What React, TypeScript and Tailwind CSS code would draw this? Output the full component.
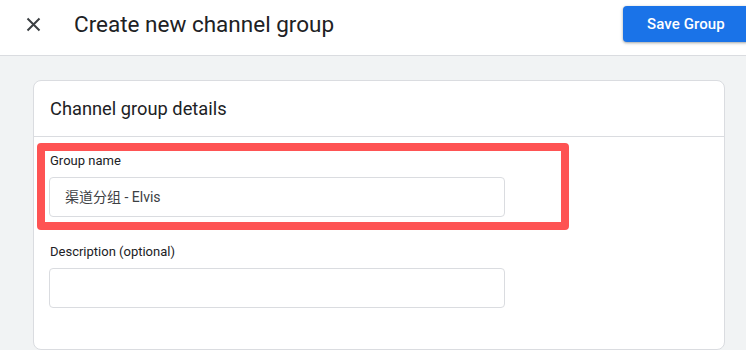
import React from "react";

const font = { fontFamily: "Roboto, 'Noto Sans CJK SC', sans-serif" };

export default function App() {
  return (
    <div className="w-full h-[350px] overflow-hidden bg-[#f1f3f4]" style={font}>
      <header className="h-[56px] bg-white border-b border-[#dadce0] flex items-start">
        <div className="h-[48px] flex items-center w-full">
          <button className="ml-[26px] w-[15px] h-[15px] flex items-center justify-center text-[#3c4043]">
            <svg width="15" height="15" viewBox="0 0 15 15" fill="none" stroke="currentColor" strokeWidth="2">
              <path d="M1.5 1.5 L13.5 13.5 M13.5 1.5 L1.5 13.5" />
            </svg>
          </button>
          <h1 className="ml-[33px] text-[22.5px] leading-[28px] text-[#202124] font-normal">Create new channel group</h1>
          <button className="ml-auto -mr-[3px] h-[36px] w-[126px] rounded-[4px] bg-[#1a73e8] text-white text-[15px] font-medium tracking-[0.1px] shadow-[0_1px_2px_rgba(60,64,67,0.3),0_1px_3px_1px_rgba(60,64,67,0.15)] flex items-center pl-[24px]">
            Save Group
          </button>
        </div>
      </header>
      <div className="pt-[24px] pl-[33px] pr-[21px]">
        <div className="bg-white border border-[#dadce0] rounded-[8px] h-[270px]">
          <div className="h-[56px] border-b border-[#dadce0] flex items-center px-[16px]">
            <h2 className="text-[18.3px] leading-[24px] text-[#202124] font-normal pt-[1px]">Channel group details</h2>
          </div>
          <div className="relative px-[15px]">
            <div className="absolute left-[3px] top-[6px] w-[532px] h-[87px] border-[8px] border-[#fe5353] rounded-[4px]" />
            <div className="pt-[16px]">
              <label className="block text-[13px] leading-[16px] text-[#202124] pl-[1px]">Group name</label>
              <div className="mt-[8px] w-[456px] h-[40px] border border-[#dadce0] rounded-[4px] flex items-center pl-[15px] text-[14px] text-[#3c4043]">
                渠道分组 - Elvis
              </div>
            </div>
            <div className="pt-[27px]">
              <label className="block text-[13px] leading-[16px] text-[#202124] pl-[1px]">Description (optional)</label>
              <div className="mt-[8px] w-[456px] h-[40px] border border-[#dadce0] rounded-[4px]" />
            </div>
          </div>
        </div>
      </div>
    </div>
  );
}
